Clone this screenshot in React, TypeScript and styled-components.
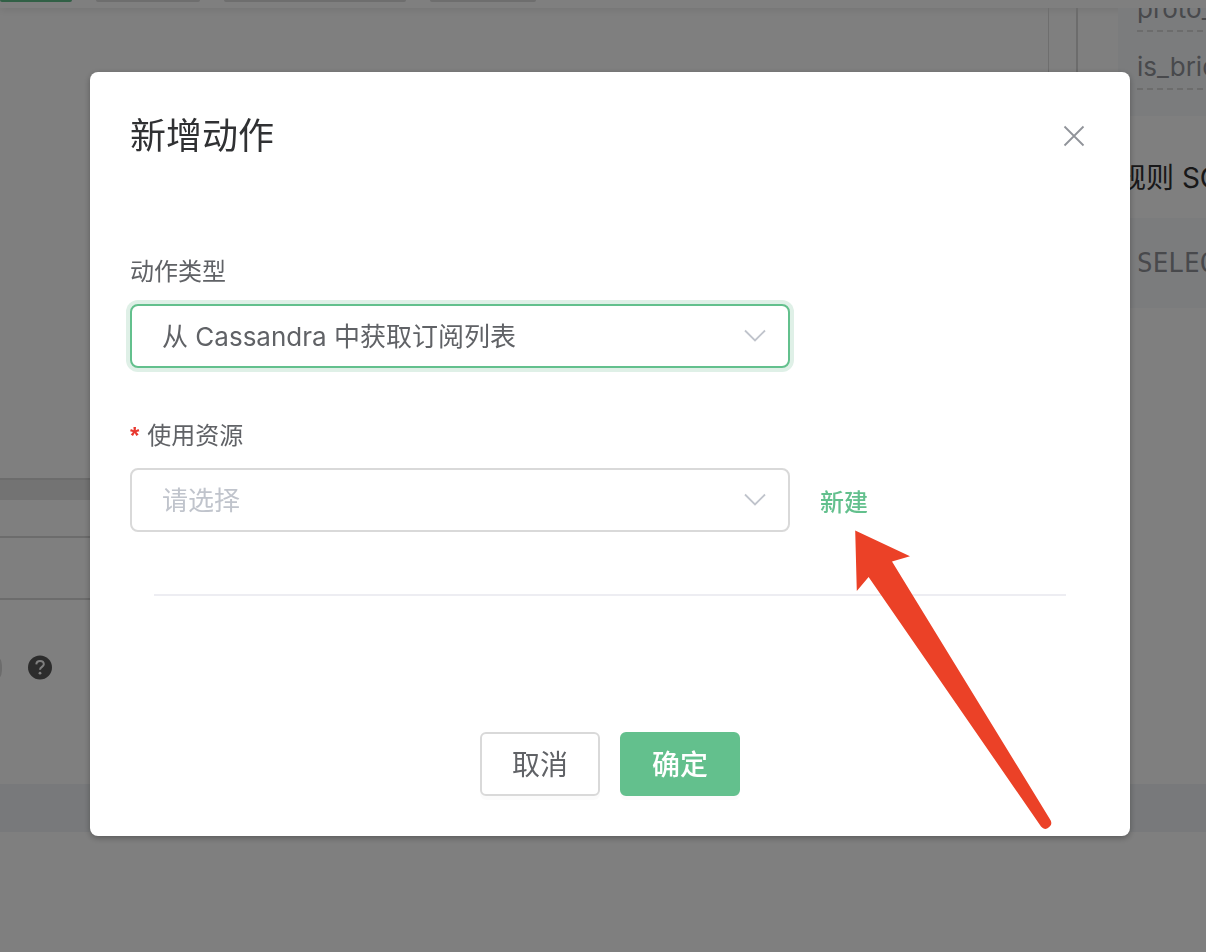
import React from 'react';
import styled, { createGlobalStyle } from 'styled-components';

const green = '#63c08d';

const GlobalStyle = createGlobalStyle`
  *, *::before, *::after { box-sizing: border-box; }
  body {
    margin: 0;
    background: #fff;
    color: #606266;
    font-family: Inter, "Noto Sans CJK SC", sans-serif;
    font-size: 26px;
    overflow: hidden;
  }
  button, select { font-family: inherit; }
`;

const Page = styled.div`
  display: flex;
  flex-direction: column;
  min-height: 100vh;
  overflow: hidden;
`;

const TopBar = styled.header`
  display: flex;
  align-items: flex-end;
  gap: 24px;
  height: 8px;
  padding-bottom: 6px;
  box-shadow: 0 2px 8px rgba(0, 0, 0, 0.1);
`;

const Chip = styled.span<{ $width: number; $active?: boolean }>`
  width: ${(p) => p.$width}px;
  height: 2px;
  border-radius: 0 0 4px 4px;
  background: ${(p) => (p.$active ? green : '#dcdcdc')};
`;

const Columns = styled.div`
  display: flex;
  height: 776px;
`;

const MainColumn = styled.main`
  flex: 1;
  display: flex;
  flex-direction: column;
`;

const Editor = styled.div`
  height: 470px;
  margin-right: 27px;
  border-right: 1px solid #dcdcdc;
`;

const ScrollTrack = styled.div`
  height: 22px;
  border-top: 2px solid #d8d8d8;
  background: #e6e6e6;
`;

const TableLine = styled.div<{ $height: number }>`
  height: ${(p) => p.$height}px;
  border-bottom: 2px solid #d8d8d8;
`;

const SwitchRow = styled.div`
  display: flex;
  align-items: center;
  gap: 26px;
  padding-top: 55px;
`;

const SwitchEdge = styled.span`
  width: 2px;
  height: 18px;
  border-radius: 0 2px 2px 0 / 0 9px 9px 0;
  background: #d8d8d8;
`;

const SideColumn = styled.aside`
  width: 130px;
  padding-left: 40px;
  border-left: 2px solid #d8d8d8;
  overflow: hidden;
  white-space: nowrap;
`;

const FieldPanel = styled.div`
  display: flex;
  flex-direction: column;
  justify-content: flex-end;
  height: 108px;
  padding: 0 0 26px 19px;
  overflow: hidden;
  background: #f7f8fb;
  color: #909399;
`;

const Field = styled.div`
  flex: none;
  height: 58px;
  padding-top: 12px;
  line-height: 46px;
  background: repeating-linear-gradient(90deg, #d8d8d8 0 6px, transparent 6px 10px) bottom / 100% 2px no-repeat;
`;

const SideTitle = styled.h3`
  margin: 0;
  height: 102px;
  padding-top: 40px;
  color: #303133;
  font-size: 28px;
  font-weight: 400;
  line-height: 44px;
`;

const Code = styled.code`
  display: block;
  height: 90px;
  padding-left: 19px;
  background: #f7f8fb;
  color: #909399;
  font-family: "DejaVu Sans Mono", monospace;
  font-size: 26px;
  line-height: 90px;
`;

const Band = styled.div`
  height: 48px;
  background: #f0f3f6;
`;

const Overlay = styled.div`
  position: fixed;
  inset: 0;
  padding: 72px 76px 0 90px;
  background: rgba(0, 0, 0, 0.5);
`;

const Dialog = styled.section`
  position: relative;
  padding: 40px;
  border-radius: 8px;
  background: #fff;
  box-shadow: 0 2px 6px rgba(0, 0, 0, 0.3);
`;

const DialogHeader = styled.header`
  display: flex;
  align-items: center;
  justify-content: space-between;
  height: 48px;
  margin-bottom: 88px;
`;

const Title = styled.h2`
  margin: 0;
  color: #303133;
  font-size: 36px;
  font-weight: 400;
  line-height: 48px;
`;

const CloseButton = styled.button`
  display: flex;
  align-items: center;
  justify-content: center;
  width: 32px;
  height: 32px;
  padding: 0;
  border: 0;
  background: none;
`;

const FormItem = styled.div`
  margin-bottom: 44px;
`;

const Label = styled.label`
  display: flex;
  gap: 8px;
  height: 56px;
  font-size: 24px;
  line-height: 48px;
`;

const Required = styled.span`
  color: #e8382f;
  font-family: "Liberation Sans", sans-serif;
  font-weight: 700;
`;

const Row = styled.div`
  display: flex;
  align-items: center;
  gap: 30px;
`;

const SelectBox = styled.div`
  position: relative;
  width: 660px;
`;

const Select = styled.select<{ $active?: boolean; $empty?: boolean }>`
  appearance: none;
  display: block;
  width: 100%;
  height: 64px;
  padding: 0 60px 0 30px;
  border: 2px solid ${(p) => (p.$active ? green : '#d9d9d9')};
  border-radius: 8px;
  outline: none;
  background: #fff;
  box-shadow: ${(p) => (p.$active ? '0 0 0 4px #dff0e7' : 'none')};
  color: ${(p) => (p.$empty ? '#c0c4cc' : '#606266')};
  font-size: 26px;
`;

const Chevron = styled.svg`
  position: absolute;
  top: 24px;
  right: 24px;
  pointer-events: none;
`;

const CreateLink = styled.a`
  color: ${green};
  font-size: 24px;
  font-weight: 500;
  text-decoration: none;
`;

const Divider = styled.hr`
  height: 2px;
  margin: 62px 24px 136px;
  border: 0;
  background: #ededf2;
`;

const Actions = styled.footer`
  display: flex;
  justify-content: center;
  gap: 20px;
`;

const Button = styled.button<{ $primary?: boolean }>`
  width: 120px;
  height: 64px;
  padding: 0 0 2px;
  border: 2px solid ${(p) => (p.$primary ? green : '#d9d9d9')};
  border-radius: 6px;
  background: ${(p) => (p.$primary ? green : '#fff')};
  box-shadow: 0 4px 0 rgba(0, 0, 0, 0.016);
  color: ${(p) => (p.$primary ? '#fff' : '#606266')};
  font-size: 28px;
  font-weight: ${(p) => (p.$primary ? 500 : 400)};
`;

const Pointer = styled.svg`
  position: absolute;
  top: 458px;
  left: 764px;
  pointer-events: none;
`;

const DownIcon = () => (
  <Chevron width="22" height="16" viewBox="0 0 22 16" fill="none" aria-hidden="true">
    <path d="M1 2.5 11 12.5 21 2.5" stroke="#c0c4cc" strokeWidth="1.8" />
  </Chevron>
);

export default function App() {
  return (
    <>
      <GlobalStyle />
      <Page>
        <TopBar>
          <Chip $width={72} $active />
          <Chip $width={104} />
          <Chip $width={182} />
          <Chip $width={106} />
        </TopBar>
        <Columns>
          <MainColumn>
            <Editor />
            <ScrollTrack />
            <TableLine $height={38} />
            <TableLine $height={62} />
            <SwitchRow>
              <SwitchEdge />
              <svg width="24" height="25" viewBox="0 0 24 25" fill="none" role="img" aria-label="help">
                <circle cx="12" cy="12.5" r="12" fill="#585858" />
                <path d="M8.3 9.4C8.400 7.200 9.900 5.900 12 5.900c2.200 0 3.800 1.300 3.800 3.300 0 2.600-3.800 2.800-3.800 5.600" stroke="#fff" strokeWidth="2" />
                <circle cx="12" cy="18.200" r="1.400" fill="#fff" />
              </svg>
            </SwitchRow>
          </MainColumn>
          <SideColumn>
            <FieldPanel>
              <Field>proto_ver</Field>
              <Field>is_bridge</Field>
            </FieldPanel>
            <SideTitle>规则 SQL</SideTitle>
            <Code>SELECT</Code>
          </SideColumn>
        </Columns>
        <Band />
      </Page>

      <Overlay>
        <Dialog role="dialog" aria-modal="true" aria-labelledby="dialog-title">
          <DialogHeader>
            <Title id="dialog-title">新增动作</Title>
            <CloseButton type="button" aria-label="关闭">
              <svg width="22" height="22" viewBox="0 0 22 22" fill="none">
                <path d="M1.500 1.500 20.500 20.500M20.500 1.500 1.500 20.500" stroke="#909399" strokeWidth="1.800" />
              </svg>
            </CloseButton>
          </DialogHeader>

          <FormItem>
            <Label htmlFor="action-type">动作类型</Label>
            <SelectBox>
              <Select id="action-type" $active>
                <option>从 Cassandra 中获取订阅列表</option>
              </Select>
              <DownIcon />
            </SelectBox>
          </FormItem>

          <FormItem>
            <Label htmlFor="resource">
              <Required>*</Required>使用资源
            </Label>
            <Row>
              <SelectBox>
                <Select id="resource" $empty>
                  <option>请选择</option>
                </Select>
                <DownIcon />
              </SelectBox>
              <CreateLink href="#new">新建</CreateLink>
            </Row>
          </FormItem>

          <Divider />

          <Actions>
            <Button type="button">取消</Button>
            <Button type="button" $primary>确定</Button>
          </Actions>

          <Pointer width="200" height="302" viewBox="0 0 200 302" aria-hidden="true">
            <path
              d="M1.200 .5 56 26.300 38 31.500 195.500 288.500Q200 294.500 193.500 298.300 190 300.300 187 296.500L14.600 47 2.800 61Z"
              fill="#eb4127"
            />
          </Pointer>
        </Dialog>
      </Overlay>
    </>
  );
}
